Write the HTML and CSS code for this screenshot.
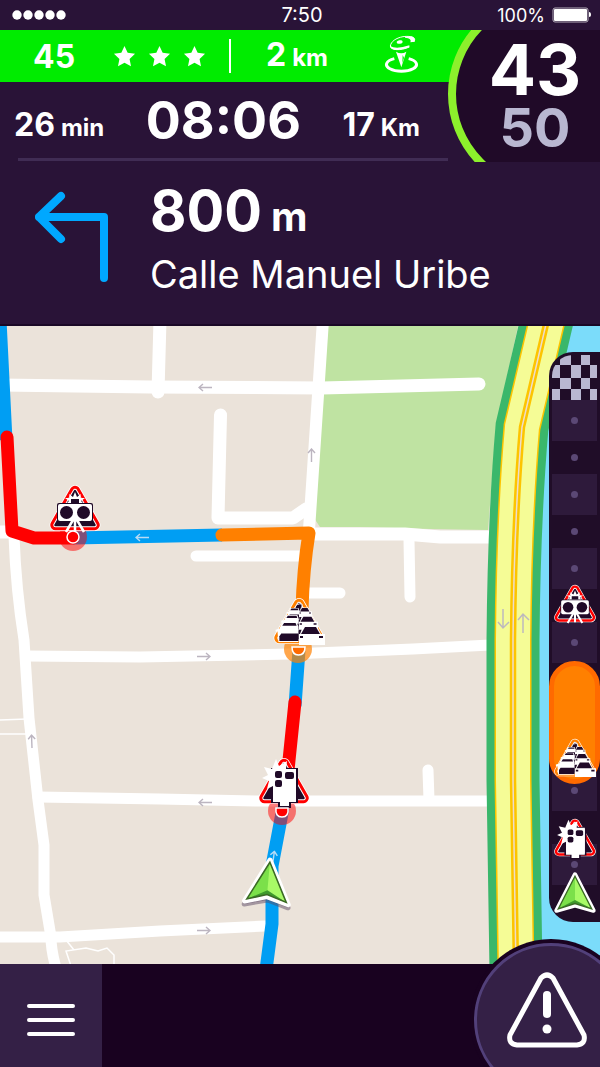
FILE: index.html
```html
<!DOCTYPE html>
<html lang="es">
<head>
    <meta charset="UTF-8">
    <meta name="viewport" content="width=device-width, initial-scale=1.0">
    <title>Calle Manuel Uribe</title>
    <link rel="stylesheet" href="styles.css">
</head>
<body>
    <!-- shared icons -->
    <svg class="sprite" aria-hidden="true">
        <symbol id="star" viewBox="0 0 24 24">
            <path d="M12 1 L15.3 8.2 L23 9.1 L17.3 14.5 L18.8 22.3 L12 18.4 L5.2 22.3 L6.7 14.5 L1 9.1 L8.7 8.2 Z" fill="#fff"/>
        </symbol>
        <symbol id="triangle" viewBox="0 0 52 54">
            <g stroke-linejoin="round">
                <path d="M26 7 L45.500 41 H6.500 Z" fill="#fff" stroke="#fff" stroke-width="12"/>
                <path d="M26 7 L45.500 41 H6.500 Z" fill="currentColor" stroke="currentColor" stroke-width="10.500"/>
                <path d="M26 7 L45.500 41 H6.500 Z" fill="#fff" stroke="#fff" stroke-width="4.500"/>
                <path d="M26 7 L45.500 41 H6.500 Z" fill="#200a28" stroke="#200a28" stroke-width="2.500"/>
            </g>
        </symbol>
        <symbol id="camera" viewBox="0 0 52 54">
            <use href="#triangle" width="52" height="54"/>
            <path d="M26 8 L28 13 L32 10 L31 14 L36 14 L32 17 L35 20 H17 L20 17 L16 14 L21 14 L20 10 L24 13 Z" fill="#fff"/>
            <rect x="22" y="15" width="8" height="4" fill="#200a28"/>
            <rect x="8" y="19" width="36" height="19" rx="2" fill="#200a28"/>
            <rect x="9" y="20" width="34" height="17" rx="2" fill="#fff"/>
            <circle cx="17.500" cy="28.500" r="6.500" fill="#200a28"/>
            <circle cx="34.500" cy="28.500" r="6.500" fill="#200a28"/>
            <path d="M26 34 V47 M24 36 L17 48 M28 36 L35 48" stroke="#fff" stroke-width="2.500" fill="none"/>
        </symbol>
        <symbol id="lightcam" viewBox="0 0 52 54">
            <use href="#triangle" width="52" height="54"/>
            <path d="M14 30 V12 H39 V45 H32 V50 H21 V45 H14 Z" fill="#fff" stroke="#200a28" stroke-width="2"/>
            <path d="M18 2 L21 9 L29 4 L28 12 H38 V45 H31 V49 H22 V45 H15 V29 L9 32 L11 24 L4 21 L10 18 L6 10 L14 12 Z" fill="#fff"/>
            <rect x="17" y="14" width="7" height="7" rx="2" fill="#200a28"/>
            <rect x="27" y="15" width="9" height="7" rx="2" fill="#200a28"/>
            <rect x="17" y="23" width="7" height="7" rx="2" fill="#200a28"/>
        </symbol>
        <symbol id="car-front" viewBox="0 0 26 20">
            <path d="M4 1 H18 L22 9 H26 V20 H0 V9 H1 Z" fill="#fff"/>
            <path d="M6 2 H17 L21 9 H2 Z" fill="#200a28"/>
            <path d="M1 12 H4 M20 12 H24" stroke="#200a28" stroke-width="2"/>
        </symbol>
        <symbol id="car-back" viewBox="0 0 24 22">
            <path d="M7 0 H22 L24 5 V21 H3 L2 10 H0 V8 L4 7 Z" fill="#fff"/>
            <path d="M9 1 H21 L22 4 H7 Z" fill="#200a28"/>
            <path d="M6 12 H24 V20 H4 V15 Z" fill="#200a28"/>
        </symbol>
        <symbol id="traffic" viewBox="0 0 52 54">
            <use href="#triangle" width="52" height="54"/>
            <path d="M22 11 Q23 6 29 7 V16 H21 Z" fill="#200a28" stroke="#fff" stroke-width="1"/>
            <use href="#car-back" x="13" y="11" width="14" height="12"/>
            <use href="#car-back" x="8" y="18" width="18" height="16"/>
            <use href="#car-back" x="2" y="25" width="24" height="21"/>
            <use href="#car-front" x="26" y="10" width="13" height="10"/>
            <use href="#car-front" x="26" y="18" width="19" height="15"/>
            <use href="#car-front" x="26" y="28" width="26" height="20"/>
        </symbol>
        <symbol id="arrow-me" viewBox="0 0 48 50">
            <path d="M24 4 L45 45 L24 39 L3 45 Z" fill="#fff" stroke="#fff" stroke-width="5" stroke-linejoin="round"/>
            <path d="M24 6 L43 43 L24 37 L5 43 Z" fill="#7be04a"/>
            <path d="M24 6 L43 43 L24 37 Z" fill="#a8fa66"/>
            <path d="M5 43 L24 33 L43 43 L24 37 Z" fill="#3f9a2c"/>
            <path d="M24 6 L43 43 L24 37 L5 43 Z" fill="none" stroke="#3b6a25" stroke-width="1.500"/>
        </symbol>
        <symbol id="way" viewBox="0 0 14 8">
            <path d="M14 4 H1 M5 0.500 L1 4 L5 7.500" fill="none" stroke="currentColor" stroke-width="1.400"/>
        </symbol>
    </svg>

    <div class="app">
        <header class="top">
            <div class="status">
                <svg class="signal" viewBox="0 0 55 10">
                    <g fill="#fff">
                        <circle cx="5" cy="5" r="4.700"/>
                        <circle cx="16" cy="5" r="4.700"/>
                        <circle cx="27" cy="5" r="4.700"/>
                        <circle cx="38" cy="5" r="4.700"/>
                        <circle cx="49" cy="5" r="4.700"/>
                    </g>
                </svg>
                <span>7:50</span>
                <span class="battery">100%
                    <svg viewBox="0 0 40 16">
                        <rect x="1" y="1" width="35" height="14" rx="2" fill="none" stroke="#b5aebb"/>
                        <rect x="2" y="2" width="33" height="12" rx="1" fill="#fff"/>
                        <path d="M37 5 Q39 5 39 8 Q39 10 37 10 Z" fill="#fff"/>
                    </svg>
                </span>
            </div>

            <div class="dash">
                <div class="alert-bar">
                    <div class="rating">
                        <strong>45</strong>
                        <span class="stars">
                            <svg><use href="#star"/></svg>
                            <svg><use href="#star"/></svg>
                            <svg><use href="#star"/></svg>
                        </span>
                    </div>
                    <div class="distance">
                        <strong class="measure"><span>2</span><small>km</small></strong>
                        <svg viewBox="253 108 105 117">
                            <path d="M284 179 A45 20 0 1 0 327 179" fill="none" stroke="#fff" stroke-width="9"/>
                            <path d="M289 158 Q305 167 320 158 L305 205 Z" fill="#fff"/>
                            <path d="M309 168 L313 176 L308 193 Z" fill="#00ec00"/>
                            <path d="M342 129 L345 122 C344 112 325 111 310 113 C288 117 274 128 272 141 C272 154 303 156 329 144" fill="none" stroke="#fff" stroke-width="3"/>
                            <path d="M316 113 Q350 108 345 128 L332 130 Q338 118 316 116 Z" fill="#fff"/>
                            <path d="M271 141 Q290 152 329 139 V145 Q303 156 284 152 Q271 149 271 141 Z" fill="#fff"/>
                            <ellipse cx="300" cy="129" rx="9" ry="5" fill="#fff" transform="rotate(-12 300 129)"/>
                        </svg>
                    </div>
                </div>
                <div class="trip">
                    <span class="measure"><span>26</span><small>min</small></span>
                    <span class="eta">08:06</span>
                    <span class="measure"><span>17</span><small>Km</small></span>
                </div>
                <div class="speed">
                    <svg viewBox="0 0 152 132">
                        <circle cx="100" cy="64" r="96" fill="#200a28"/>
                        <rect x="100" width="52" height="132" fill="#200a28"/>
                        <path d="M100 -32 A96 96 0 0 0 100 160" fill="none" stroke="#8cf02c" stroke-width="8"/>
                    </svg>
                    <div class="speed-text">
                        <span class="current">43</span>
                        <span class="limit">50</span>
                    </div>
                </div>
            </div>

            <div class="turn">
                <svg class="turn-icon" viewBox="0 0 74 92">
                    <path d="M69 87 V26 H4 M26 5 L4 26 L26 48" fill="none" stroke="#00a8ff" stroke-width="8" stroke-linecap="round" stroke-linejoin="round"/>
                </svg>
                <div>
                    <p class="turn-distance"><span>800</span><small>m</small></p>
                    <p class="turn-street">Calle Manuel Uribe</p>
                </div>
            </div>
        </header>

        <main class="map">
            <svg class="map-canvas" viewBox="0 326 600 638" preserveAspectRatio="xMidYMid slice">
                <!-- ground -->
                <path d="M540 326 H600 V964 H520 Z" fill="#7bdcfa"/>
                <path d="M328 326 H518 L496 427 L488 530 L430 529 L360 527 H320 L314 518 Z" fill="#bfe3a2"/>

                <!-- streets -->
                <g fill="none" stroke="#fff" stroke-linecap="round" stroke-width="13">
                    <path d="M0 385 L150 387 L322 388 L479 384"/>
                    <path d="M160 320 L158 392"/>
                    <path d="M220.500 415 L218 518 H293 L306 509" stroke-linejoin="round"/>
                    <path d="M0 532 H12"/>
                    <path d="M309 534 H405 L440 537 H490"/>
                    <path d="M323 320 L309 530" stroke-width="12"/>
                </g>
                <g fill="none" stroke="#fff" stroke-linecap="round" stroke-width="11">
                    <path d="M409 540 L410 597"/>
                    <path d="M196 556 H302"/>
                    <path d="M305 593 H340"/>
                    <path d="M14 536 Q16 590 24 640 L29 718 L38 800 L44 845 V895 L51 937 Q51 950 56 968"/>
                    <path d="M26 656 L140 657 L290 654 L413 649 L490 645"/>
                    <path d="M38 797 L160 799 L255 801 H490"/>
                    <path d="M428 770 L429 800"/>
                    <path d="M0 937 H60 L160 931 L265 926"/>
                </g>
                <path d="M0 720 L27 719 M0 734 H28 M66 940 L74 950 M71 966 L66 951 L86 948 L98 951 L107 948 L114 955 V966" fill="none" stroke="#fff" stroke-width="1.500"/>

                <!-- highway -->
                <g fill="none">
                    <path d="M547 320 L522 427 Q514 520 513 640 V780 L516 970" stroke="#3ab76b" stroke-width="53"/>
                    <path d="M547 320 L522 427 Q514 520 513 640 V780 L516 970" stroke="#fdc400" stroke-width="37"/>
                    <path d="M547 320 L522 427 Q514 520 513 640 V780 L516 970" stroke="#f5fc96" stroke-width="34"/>
                    <path d="M547 320 L522 427 Q514 520 513 640 V780 L516 970" stroke="#fdc400" stroke-width="6.500"/>
                    <path d="M547 320 L522 427 Q514 520 513 640 V780 L516 970" stroke="#eedccb" stroke-width="1.500"/>
                </g>
                <path d="M503 609 V628 M498 622 L503 628 L509 622 M523 633 V614 M518 620 L523 614 L529 620" fill="none" stroke="#bdb9be" stroke-width="1.500"/>

                <!-- street directions -->
                <g color="#bcb5c0">
                    <use href="#way" x="198" y="383" width="14" height="9"/>
                    <use href="#way" x="198" y="798" width="14" height="9"/>
                    <use href="#way" width="14" height="9" transform="translate(211 661) rotate(180)"/>
                    <use href="#way" width="14" height="9" transform="translate(211 935) rotate(180)"/>
                    <use href="#way" width="14" height="9" transform="translate(316 448) rotate(90)"/>
                    <use href="#way" width="14" height="9" transform="translate(36 734) rotate(88)"/>
                </g>

                <!-- route -->
                <g fill="none" stroke-width="13" stroke-linejoin="round">
                    <path d="M0 320 L6 440 M73 538 L222 535 M299 650 L295 706 M283 808 L272 866 L272 924 L266 970" stroke="#009ef3"/>
                    <path d="M7 437 L12 531 L34 538 H73 M295 702 L288 770" stroke="#f00" stroke-linecap="round"/>
                    <path d="M222 535 L309 533 Q303 570 302 610" stroke="#ff8000" stroke-linecap="round"/>
                </g>
                <g color="#b7dbf5">
                    <use href="#way" x="135" y="533" width="14" height="9"/>
                    <use href="#way" width="14" height="9" transform="translate(279 851) rotate(98)"/>
                </g>

                <!-- alerts on the route -->
                <g fill="#f00" fill-opacity="0.5">
                    <circle cx="73" cy="537" r="14"/>
                    <circle cx="282" cy="811" r="14"/>
                </g>
                <circle cx="298" cy="649" r="14" fill="#ff8000" fill-opacity="0.7"/>
                <use href="#camera" x="49" y="484" width="52" height="54" color="#f00"/>
                <use href="#traffic" x="273" y="597" width="52" height="54" color="#ff8000"/>
                <use href="#lightcam" x="258" y="757" width="52" height="54" color="#f00"/>
                <g stroke="#fff" stroke-width="1.500">
                    <circle cx="73" cy="537" r="6" fill="#f00"/>
                    <path d="M292 647 Q292 655 298.500 655 Q305 655 305 647 Z" fill="#ff6a00"/>
                    <path d="M276 808 Q275 817 282 817 Q289 817 288 808 Z" fill="#f00"/>
                </g>
                <g transform="rotate(5 268 884)">
                    <path d="M269 862 L290 906 L269 900 L246 906 Z" fill="#5b4a66" fill-opacity="0.5" stroke="#5b4a66" stroke-opacity="0.5" stroke-width="5" stroke-linejoin="round"/>
                    <use href="#arrow-me" x="243" y="856" width="50" height="52"/>
                </g>
            </svg>

            <div class="rail">
                <svg class="flag" viewBox="0 0 45 45" preserveAspectRatio="none">
                    <path d="M8 0 H19 V10 H8 Z M29 0 H38 V10 H29 Z M0 10 H8 V23 H0 Z M19 10 H29 V23 H19 Z M38 10 H45 V23 H38 Z M8 23 H19 V34 H8 Z M29 23 H38 V34 H29 Z M0 34 H8 V45 H0 Z M19 34 H29 V45 H19 Z M38 34 H45 V45 H38 Z" fill="#b9b7d1"/>
                </svg>
                <ul class="steps">
                    <li></li><li></li><li></li><li></li><li></li><li></li><li></li>
                    <li></li><li></li><li></li><li></li><li></li><li></li>
                </ul>
                <div class="jam"></div>
                <svg class="pin pin-camera"><use href="#camera"/></svg>
                <svg class="pin pin-traffic"><use href="#traffic"/></svg>
                <svg class="pin pin-lightcam"><use href="#lightcam"/></svg>
                <svg class="pin pin-me"><use href="#arrow-me"/></svg>
            </div>
        </main>

        <footer class="bottom">
            <button class="menu" type="button" aria-label="Menú">
                <svg viewBox="0 0 50 32">
                    <path d="M3 2 H47 M3 16 H47 M3 30 H47" stroke="#fff" stroke-width="4" stroke-linecap="round"/>
                </svg>
            </button>
            <button class="report" type="button" aria-label="Avisar">
                <svg viewBox="0 0 82 76">
                    <path d="M35 6 Q41 0 47 6 L78 63 Q80 72 71 73 H11 Q2 72 4 63 Z" fill="none" stroke="#fff" stroke-width="5" stroke-linejoin="round"/>
                    <path d="M41 23 V42" stroke="#fff" stroke-width="8" stroke-linecap="round"/>
                    <circle cx="41" cy="57" r="4.500" fill="#fff"/>
                </svg>
            </button>
        </footer>
    </div>
</body>
</html>
```
FILE: styles.css
```css
* {
    box-sizing: border-box;
}

body {
    margin: 0;
    background-color: #190220;
    color: #fff;
    font-family: Inter, "Liberation Sans", sans-serif;
}

p {
    margin: 0;
}

svg {
    display: block;
}

button {
    padding: 0;
    border: none;
    cursor: pointer;
}

.sprite {
    position: absolute;
    width: 0;
    height: 0;
}

.app {
    display: flex;
    flex-direction: column;
    min-height: 100vh;
    overflow: hidden;
}

/* header */
.top {
    background-color: #291337;
    border-bottom: 2px solid #1a0826;
}

.status {
    display: grid;
    grid-template-columns: 1fr auto 1fr;
    align-items: center;
    height: 30px;
    padding: 0 8px 0 12px;
    font-size: 20px;
}

.signal {
    width: 55px;
    height: 10px;
}

.battery {
    display: flex;
    align-items: center;
    justify-content: flex-end;
    gap: 7px;
    font-size: 18px;
}

.battery svg {
    width: 40px;
    height: 16px;
}

.dash {
    display: grid;
    grid-template-columns: 1fr 152px;
    grid-template-rows: 52px 80px;
}

.alert-bar {
    grid-column: 1 / 3;
    grid-row: 1;
    display: flex;
    align-items: center;
    background-color: #00ec00;
    font-size: 32px;
}

.measure {
    display: flex;
    align-items: baseline;
    gap: 6px;
    font-size: 32px;
}

.measure small {
    font-size: 24px;
}

.rating,
.distance {
    display: flex;
    align-items: center;
    justify-content: space-between;
}

.rating {
    width: 231px;
    height: 34px;
    padding: 0 23px 0 33px;
    border-right: 2px solid #fff;
}

.stars {
    display: flex;
    gap: 12px;
}

.stars svg {
    width: 23px;
    height: 23px;
}

.distance {
    width: 188px;
    padding: 0 0 3px 35px;
}

.distance svg {
    width: 35px;
    height: 39px;
}

.trip {
    grid-column: 1;
    grid-row: 2;
    display: flex;
    align-items: center;
    justify-content: space-between;
    height: 79px;
    margin-left: 18px;
    padding-right: 28px;
    border-bottom: 3px solid #402c54;
    font-weight: 700;
}

.trip .measure {
    padding-top: 9px;
}

.trip .measure:first-child {
    margin-left: -4px;
}

.eta {
    font-size: 52px;
}

.speed {
    grid-column: 2;
    grid-row: 1 / 3;
    display: grid;
}

.speed > * {
    grid-area: 1 / 1;
}

.speed svg {
    width: 100%;
    height: 132px;
}

.speed-text {
    display: flex;
    flex-direction: column;
    align-items: center;
    padding: 12px 0 0 22px;
    font-weight: 700;
}

.current {
    font-size: 70px;
    line-height: 56px;
}

.limit {
    font-size: 54px;
    line-height: 60px;
    color: #b9b7d1;
}

.turn {
    display: flex;
    align-items: center;
    gap: 41px;
    height: 162px;
    padding: 0 35px 12px;
}

.turn-icon {
    width: 74px;
    height: 92px;
}

.turn-distance {
    display: flex;
    align-items: baseline;
    gap: 9px;
    padding-top: 7px;
    font-size: 56px;
    line-height: 60px;
    font-weight: 700;
}

.turn-distance small {
    font-size: 40px;
}

.turn-street {
    font-size: 38px;
    line-height: 54px;
}

/* map */
.map {
    position: relative;
    flex: 1;
    min-height: 400px;
    background-color: #ebe3da;
}

.map-canvas {
    position: absolute;
    width: 100%;
    height: 100%;
}

.rail {
    position: absolute;
    top: 26px;
    right: 0;
    width: 51px;
    padding: 3px 3px 37px;
    border-radius: 24px 0 0 24px;
    background-color: #200d28;
    overflow: hidden;
}

.flag {
    width: 45px;
    height: 45px;
    border-top-left-radius: 21px;
    background-color: #200d28;
}

.steps {
    margin: 0;
    padding: 0;
    list-style: none;
}

.steps li {
    display: flex;
    align-items: center;
    justify-content: center;
    height: 33px;
}

.steps li:nth-child(odd) {
    height: 41px;
    background-color: #2e1a3b;
}

.steps li::before {
    content: "";
    width: 7px;
    height: 7px;
    border-radius: 50%;
    background-color: #5b4875;
}

.jam {
    position: absolute;
    top: 309px;
    left: 0;
    width: 51px;
    height: 123px;
    border: 5px solid #ff6a00;
    border-radius: 26px;
    background-color: #ff8000;
}

.pin {
    position: absolute;
    left: 4px;
    width: 44px;
    height: 44px;
    color: #f00;
}

.pin-camera {
    top: 232px;
}

.pin-traffic {
    top: 386px;
    color: #ff8000;
}

.pin-lightcam {
    top: 466px;
}

.pin-me {
    top: 519px;
}

/* bottom bar */
.bottom {
    position: relative;
    height: 103px;
    background-color: #190220;
}

.menu {
    display: flex;
    align-items: center;
    justify-content: center;
    width: 102px;
    height: 103px;
    padding-top: 9px;
    background-color: #342046;
}

.menu svg {
    width: 52px;
    height: 32px;
}

.report {
    position: absolute;
    top: -21px;
    right: -28px;
    display: flex;
    align-items: center;
    justify-content: center;
    width: 154px;
    height: 154px;
    padding: 0 8px 20px 0;
    border: 3px solid #52407a;
    border-radius: 50%;
    background-color: #342046;
    box-shadow: 0 0 0 4px #190220;
}

.report svg {
    width: 82px;
    height: 76px;
}
```
